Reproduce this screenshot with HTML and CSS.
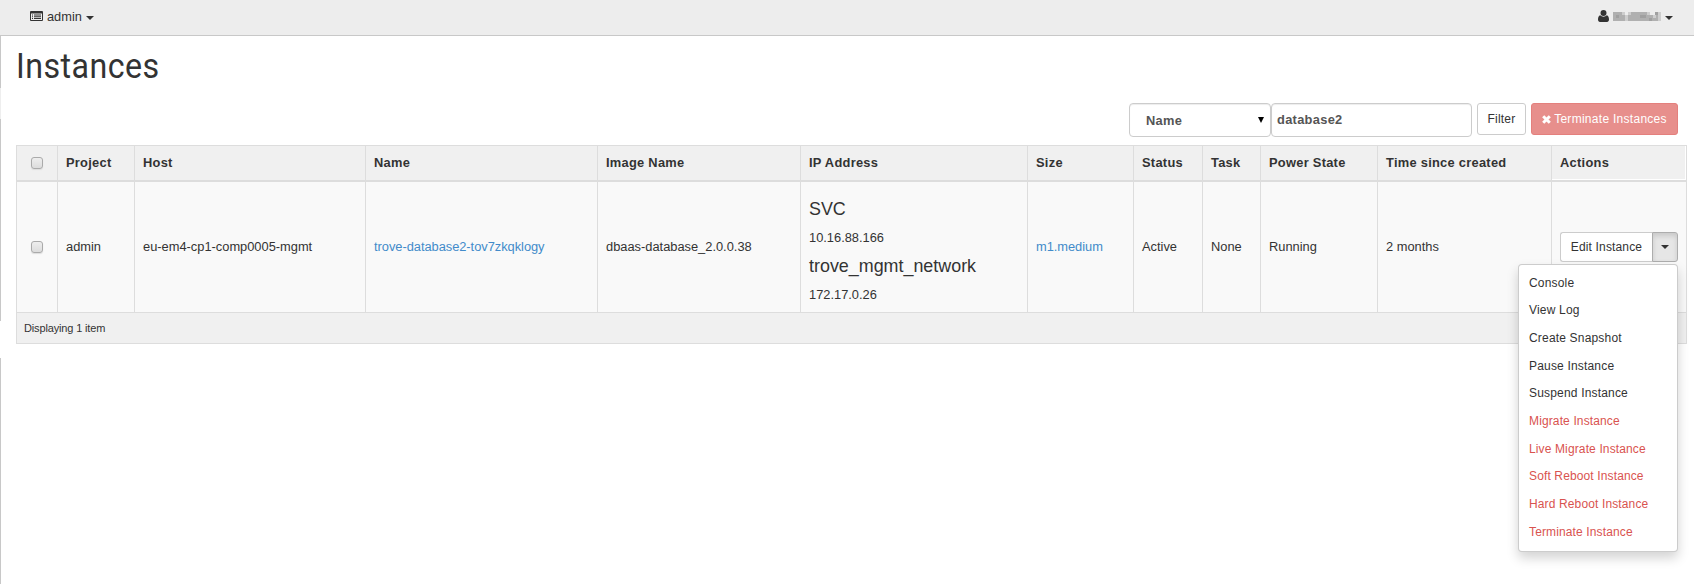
FILE: index.html
```html
<!DOCTYPE html>
<html lang="en">
<head>
<meta charset="utf-8">
<title>Instances</title>
<link rel="stylesheet" href="styles.css">
</head>
<body>
<header class="topbar">
  <div class="context">
    <svg class="icon-list" width="13" height="10" viewBox="0 0 13 10"><path fill="#333" fill-rule="evenodd" d="M1 0h11a1 1 0 0 1 1 1v8a1 1 0 0 1-1 1H1a1 1 0 0 1-1-1V1a1 1 0 0 1 1-1zM1 2.600v6.400h11V2.600zM2 3.500h1v1H2zM4 3.500h7v1H4zM2 5.300h1v1H2zM4 5.300h7v1H4zM2 7.100h1v1H2zM4 7.100h7v1H4z"/></svg>
    <span>admin</span><i class="caret"></i>
  </div>
  <div class="user">
    <svg width="11" height="12" viewBox="0 0 11 12"><path fill="#333" d="M5.500 0a3 3 0 0 1 3 3 3 3 0 0 1-6 0 3 3 0 0 1 3-3zM2.200 5.200a4.400 4.400 0 0 0 6.600 0C10.300 5.600 11 7.500 11 9.500 11 11 10.200 12 9 12H2C.800 12 0 11 0 9.500 0 7.500.700 5.600 2.200 5.200z"/></svg>
    <svg class="redacted" width="48" height="9" viewBox="0 0 48 9"><path fill="#b0b0b0" d="M0 0h12v9H0zM15 3h31v6H15zM18 0h16v3H18z"/><path fill="#cecece" d="M9 0h3v3H9zM12 3h3v6h-3zM15 0h3v3h-3zM34 0h3v3h-3zM40 3h3v3h-3zM45 0h3v9h-3z"/><path fill="#a0a0a0" d="M3 3h3v3H3zM27 3h6v3h-6zM36 6h3v3h-3zM42 0h3v3h-3z"/></svg>
    <i class="caret"></i>
  </div>
</header>
<main class="content">
  <h1>Instances</h1>
  <div class="toolbar">
    <div class="field select"><span>Name</span><i class="arrow"></i></div>
    <div class="field query">database2</div>
    <div class="btn filter">Filter</div>
    <div class="btn danger"><svg width="9" height="9" viewBox="0 0 9 9"><path d="M1.200 1.200l6.600 6.600M7.800 1.200l-6.600 6.600" stroke="#fff" stroke-width="3"/></svg><span>Terminate Instances</span></div>
  </div>
  <div class="table">
    <div class="row head">
      <div class="check"><i class="box"></i></div><div>Project</div><div>Host</div><div>Name</div><div>Image Name</div><div>IP Address</div><div>Size</div><div>Status</div><div>Task</div><div>Power State</div><div>Time since created</div><div class="actions-head">Actions</div>
    </div>
    <div class="row body">
      <div class="check"><i class="box"></i></div><div>admin</div><div>eu-em4-cp1-comp0005-mgmt</div><div><a>trove-database2-tov7zkqklogy</a></div><div>dbaas-database_2.0.0.38</div>
      <div class="ips"><h4>SVC</h4><p>10.16.88.166</p><h4>trove_mgmt_network</h4><p>172.17.0.26</p></div>
      <div><a>m1.medium</a></div><div>Active</div><div>None</div><div>Running</div><div>2 months</div>
      <div class="actions">
        <div class="split"><span class="edit">Edit Instance</span><span class="toggle"><i class="caret"></i></span>
          <ul class="menu">
            <li>Console</li><li>View Log</li><li>Create Snapshot</li><li>Pause Instance</li><li>Suspend Instance</li>
            <li class="red">Migrate Instance</li><li class="red">Live Migrate Instance</li><li class="red">Soft Reboot Instance</li><li class="red">Hard Reboot Instance</li><li class="red">Terminate Instance</li>
          </ul>
        </div>
      </div>
    </div>
    <div class="foot">Displaying 1 item</div>
  </div>
</main>
</body>
</html>
```
FILE: styles.css
```css
* { box-sizing: border-box; }
body {
  margin: 0;
  height: 584px;
  overflow: hidden;
  display: flex;
  flex-direction: column;
  background: #fff;
  color: #333;
  font: 12.85px/18px "Liberation Sans", Arial, sans-serif;
}
h1, h4, p, ul { margin: 0; padding: 0; font-weight: normal; }
.topbar {
  height: 36px;
  flex: none;
  display: flex;
  justify-content: space-between;
  padding: 0 21px 3px 30px;
  background: #ededed;
  border-bottom: 1px solid #c8c8c8;
}
.context, .user { display: flex; align-items: center; }
.context span { margin: 1px 4px 0 4px; font-size: 12.8px; }
.user { gap: 4px; }
.caret {
  width: 0;
  height: 0;
  margin-top: 3px;
  border: 4px solid transparent;
  border-top-color: #333;
  border-bottom: 0;
}
.content {
  flex: 1;
  padding: 0 7px 0 15px;
  border-left: 1px solid;
  border-image: linear-gradient(#c8c8c8 53px, #eee 53px 84px, #c8c8c8 84px 285px, #fff 285px 322px, #c8c8c8 322px) 1;
}
h1 {
  height: 67px;
  padding-top: 10px;
  font: 35px/42px Roboto, sans-serif;
  letter-spacing: .5px;
  transform: scaleX(.92);
  transform-origin: 0 0;
}
.toolbar { height: 42px; display: flex; justify-content: flex-end; align-items: flex-start; padding-right: 9px; }
.field {
  height: 34px;
  display: flex;
  align-items: center;
  border: 1px solid #ccc;
  border-radius: 4px;
  box-shadow: inset 0 1px 1px rgba(0,0,0,.075);
  color: #555;
  font-weight: bold;
  letter-spacing: .3px;
}
.select { width: 142px; justify-content: space-between; padding: 2px 6px 0 16px; }
.arrow { border: 3px solid transparent; border-top: 6px solid #000; border-bottom: 0; margin-top: -3px; }
.query { width: 201px; padding-left: 5px; margin-right: 5px; }
.btn { height: 32px; display: flex; align-items: center; justify-content: center; border: 1px solid #ccc; border-radius: 3px; font-size: 12px; }
.filter { width: 49px; margin-right: 5px; letter-spacing: .2px; }
.danger { width: 147px; gap: 3px; background: #e78f8c; border-color: #e4807d; color: #fff; letter-spacing: .28px; }
.table { border: 1px solid #ddd; border-left: 0; }
.row { display: grid; grid-template-columns: 41px 77px 231px 232px 203px 227px 106px 69px 58px 117px 174px 135px; }
.row > div { border-left: 1px solid #ddd; padding-left: 8px; display: flex; align-items: center; white-space: nowrap; }
.head { height: 36px; background: #f0f0f0; border-bottom: 2px solid #ddd; font-weight: bold; letter-spacing: .28px; }
.row .check { justify-content: center; padding-left: 0; }
.box { width: 12px; height: 12px; border: 1px solid #aaa; border-radius: 3px; background: linear-gradient(#eee, #dcdcdc); box-shadow: 0 1px 1px #ddd; }
.head .actions-head { box-shadow: inset -1px -1px #fff; }
.body { height: 130px; grid-template-rows: 130px; background: #f9f9f9; }
.body > div { padding-bottom: 1px; }
.body a { color: #428bca; letter-spacing: -.03px; }
.body .ips { flex-direction: column; align-items: flex-start; justify-content: flex-start; padding-top: 17px; }
.ips h4 { font-size: 17.9px; line-height: 20px; margin-bottom: 10px; }
.ips p { line-height: 18px; margin-bottom: 9px; }
.ips p:last-child { margin-bottom: 0; }
.split { position: relative; display: flex; width: 118px; height: 30px; }
.edit { width: 92px; display: flex; align-items: center; justify-content: center; background: #fff; border: 1px solid #ccc; border-right: 0; border-radius: 3px 0 0 3px; font-size: 12px; letter-spacing: .15px; }
.toggle { width: 26px; display: flex; align-items: center; justify-content: center; background: #e6e6e6; border: 1px solid #adadad; border-radius: 0 3px 3px 0; box-shadow: inset 0 3px 5px rgba(0,0,0,.125); }
.toggle .caret { margin-top: 1px; }
.menu {
  position: absolute;
  top: 32px;
  right: 0;
  width: 160px;
  height: 288px;
  padding: 5px 0;
  list-style: none;
  background: #fff;
  border: 1px solid rgba(0,0,0,.2);
  border-radius: 4px;
  box-shadow: 0 6px 12px rgba(0,0,0,.175);
  font-size: 12px;
  letter-spacing: .18px;
}
.menu li { height: 27.7px; line-height: 27px; padding-left: 10px; }
.menu .red { color: #d9534f; letter-spacing: .13px; }
.foot { height: 31px; padding: 0 7px; line-height: 30px; background: #f0f0f0; border-top: 1px solid #ddd; border-left: 1px solid #ddd; font-size: 11px; letter-spacing: -.15px; }
```
